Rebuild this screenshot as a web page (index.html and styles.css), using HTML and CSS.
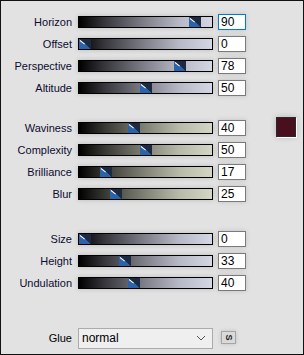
FILE: index.html
```html
<!DOCTYPE html>
<html lang="en">
<head>
  <meta charset="UTF-8" />
  <title>Horizon settings</title>
  <link rel="stylesheet" href="styles.css">
</head>
<body>
  <div class="panel">

    <div class="group cool">
      <div class="row">
        <div class="label">Horizon</div>
        <div class="track"><span class="thumb" style="left:110px"></span></div>
        <input class="val focus" value="90">
      </div>
      <div class="row">
        <div class="label">Offset</div>
        <div class="track"><span class="thumb" style="left:0px"></span></div>
        <input class="val" value="0">
      </div>
      <div class="row">
        <div class="label">Perspective</div>
        <div class="track"><span class="thumb" style="left:95px"></span></div>
        <input class="val" value="78">
      </div>
      <div class="row">
        <div class="label">Altitude</div>
        <div class="track"><span class="thumb" style="left:61px"></span></div>
        <input class="val" value="50">
      </div>
    </div>

    <div class="group warm second">
      <div class="row">
        <div class="label">Waviness</div>
        <div class="track"><span class="thumb" style="left:49px"></span></div>
        <input class="val" value="40">
        <div class="swatch"></div>
      </div>
      <div class="row">
        <div class="label">Complexity</div>
        <div class="track"><span class="thumb" style="left:61px"></span></div>
        <input class="val" value="50">
      </div>
      <div class="row">
        <div class="label">Brilliance</div>
        <div class="track"><span class="thumb" style="left:21px"></span></div>
        <input class="val" value="17">
      </div>
      <div class="row">
        <div class="label">Blur</div>
        <div class="track"><span class="thumb" style="left:31px"></span></div>
        <input class="val" value="25">
      </div>
    </div>

    <div class="group cool third">
      <div class="row">
        <div class="label">Size</div>
        <div class="track"><span class="thumb" style="left:0px"></span></div>
        <input class="val" value="0">
      </div>
      <div class="row">
        <div class="label">Height</div>
        <div class="track"><span class="thumb" style="left:40px"></span></div>
        <input class="val" value="33">
      </div>
      <div class="row">
        <div class="label">Undulation</div>
        <div class="track"><span class="thumb" style="left:49px"></span></div>
        <input class="val" value="40">
      </div>
    </div>

    <div class="row glue">
      <div class="label">Glue</div>
      <div class="select">
        <span>normal</span>
        <svg width="10" height="6" viewBox="0 0 10 6"><path d="M1 1 L5 5 L9 1" fill="none" stroke="#555" stroke-width="1"/></svg>
      </div>
      <div class="sbtn"><span>S</span></div>
    </div>

  </div>
</body>
</html>
```

FILE: styles.css
```css
body {
  margin: 0;
  padding: 0;
  background: #e2e2e2;
  font-family: "Liberation Sans", Arial, sans-serif;
}

.panel {
  width: 304px;
  height: 355px;
  box-sizing: border-box;
  border: 1px solid #111;
  background: #e2e2e2;
  padding-top: 10px;
}

.group {
  display: flex;
  flex-direction: column;
}

.second {
  margin-top: 18px;
}

.third {
  margin-top: 23px;
}

.row {
  display: flex;
  align-items: center;
  height: 22px;
}

.label {
  width: 71px;
  text-align: right;
  font-size: 11px;
  color: #0c0c30;
}

.track {
  position: relative;
  margin-left: 6px;
  width: 135px;
  height: 12px;
  box-sizing: border-box;
  border: 1px solid #000;
  box-shadow: 0 0 5px rgba(0, 0, 0, 0.18);
}

.cool .track {
  background: linear-gradient(to right, #000 0%, #38383e 20%, #80818b 50%, #b6b8c5 75%, #d4d6e3 100%);
}

.warm .track {
  background: linear-gradient(to right, #000 0%, #3a3a34 20%, #828377 50%, #b8baa8 75%, #d4d6c4 100%);
}

.thumb {
  position: absolute;
  top: 0;
  width: 12px;
  height: 10px;
  background:
    linear-gradient(to bottom left, #1c2a44 50%, transparent 50%),
    #2c62a8;
}

.thumb::before {
  content: "";
  position: absolute;
  left: 1px;
  top: 1px;
  width: 6px;
  height: 1px;
  background: #fff;
  transform: rotate(38deg);
  transform-origin: left center;
}

.val {
  margin-left: 5px;
  width: 28px;
  height: 16px;
  box-sizing: border-box;
  border: 1px solid #7a7a7a;
  background: #fff;
  padding: 0 0 0 2px;
  font-family: "Liberation Sans", Arial, sans-serif;
  font-size: 12px;
  color: #000;
  outline: none;
  box-shadow: 0 0 5px rgba(0, 0, 0, 0.15);
}

.val.focus {
  border-color: #0078d7;
}

.swatch {
  margin-left: 30px;
  margin-top: -2px;
  width: 20px;
  height: 20px;
  box-sizing: border-box;
  background: #4a0f1f;
  border: 1px solid #2a2a2a;
  box-shadow: 1px 1px 0 #fff, 0 0 6px rgba(0, 0, 0, 0.2);
}

.glue {
  margin-top: 33px;
}

.glue .label {
  color: #000;
}

.select {
  margin-left: 6px;
  width: 135px;
  height: 21px;
  box-sizing: border-box;
  border: 1px solid #ababab;
  background: #efefef;
  display: flex;
  align-items: center;
  justify-content: space-between;
  padding: 0 6px 0 3px;
  font-size: 12px;
  color: #000;
}

.sbtn {
  margin-left: 8px;
  margin-top: -1px;
  width: 15px;
  height: 13px;
  box-sizing: border-box;
  border: 1px solid #a5a5a5;
  background: #dadada;
  display: flex;
  align-items: center;
  justify-content: center;
  box-shadow: 0 0 4px rgba(0, 0, 0, 0.15);
}

.sbtn span {
  display: block;
  font-size: 9px;
  font-weight: bold;
  color: #222;
  transform: rotate(90deg);
  line-height: 9px;
}
```
